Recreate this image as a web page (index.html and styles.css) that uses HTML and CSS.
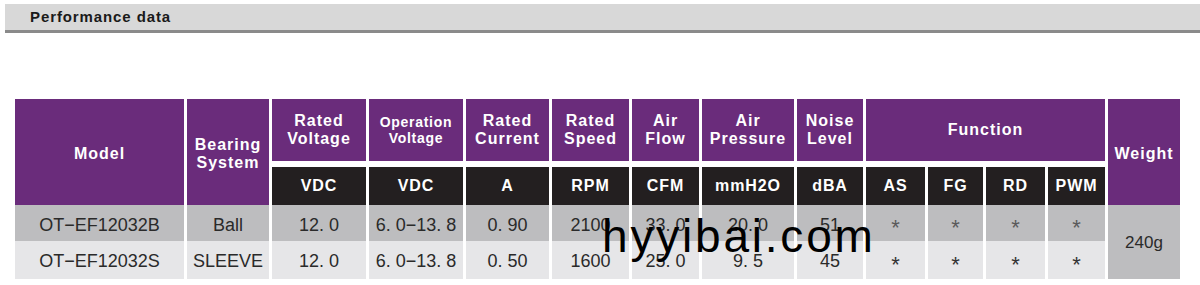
FILE: index.html
```html
<!DOCTYPE html>
<html>
<head>
<meta charset="utf-8">
<link rel="stylesheet" href="styles.css">
</head>
<body>
<div class="titlebar">Performance data</div>
<div class="tablewrap">
  <div class="grid">
    <div class="c hd tall">Model</div>
    <div class="c hd tall">Bearing<br>System</div>
    <div class="c hd">Rated<br>Voltage</div>
    <div class="c hd small">Operation<br>Voltage</div>
    <div class="c hd">Rated<br>Current</div>
    <div class="c hd">Rated<br>Speed</div>
    <div class="c hd">Air<br>Flow</div>
    <div class="c hd">Air<br>Pressure</div>
    <div class="c hd">Noise<br>Level</div>
    <div class="c hd func">Function</div>
    <div class="c hd tall">Weight</div>

    <div class="c sub">VDC</div>
    <div class="c sub">VDC</div>
    <div class="c sub">A</div>
    <div class="c sub">RPM</div>
    <div class="c sub">CFM</div>
    <div class="c sub">mmH2O</div>
    <div class="c sub">dBA</div>
    <div class="c sub">AS</div>
    <div class="c sub">FG</div>
    <div class="c sub">RD</div>
    <div class="c sub">PWM</div>

    <div class="c r1">OT−EF12032B</div>
    <div class="c r1">Ball</div>
    <div class="c r1">12. 0</div>
    <div class="c r1">6. 0−13. 8</div>
    <div class="c r1">0. 90</div>
    <div class="c r1">2100</div>
    <div class="c r1">33. 0</div>
    <div class="c r1">20. 0</div>
    <div class="c r1">51</div>
    <div class="c r1 ast">*</div>
    <div class="c r1 ast">*</div>
    <div class="c r1 ast">*</div>
    <div class="c r1 ast">*</div>
    <div class="c r1 weight">240g</div>

    <div class="c r2">OT−EF12032S</div>
    <div class="c r2">SLEEVE</div>
    <div class="c r2">12. 0</div>
    <div class="c r2">6. 0−13. 8</div>
    <div class="c r2">0. 50</div>
    <div class="c r2">1600</div>
    <div class="c r2">25. 0</div>
    <div class="c r2">9. 5</div>
    <div class="c r2">45</div>
    <div class="c r2 ast">*</div>
    <div class="c r2 ast">*</div>
    <div class="c r2 ast">*</div>
    <div class="c r2 ast">*</div>
  </div>
  <div class="watermark">hyyibai.com</div>
</div>
</body>
</html>
```
FILE: styles.css
```css
html, body {
  margin: 0;
  padding: 0;
  background: #ffffff;
}
body {
  font-family: "Liberation Sans", Arial, sans-serif;
  width: 1200px;
  height: 285px;
  overflow: hidden;
}
.titlebar {
  margin: 4px 0 0 5px;
  height: 26px;
  line-height: 26px;
  background: #d8d8d8;
  border-bottom: 3px solid #8a8a8a;
  padding-left: 25px;
  font-weight: bold;
  font-size: 15px;
  letter-spacing: 0.9px;
  color: #1a1a1a;
}
.tablewrap {
  position: relative;
  margin: 66px 0 0 15px;
  width: 1165px;
}
.grid {
  display: grid;
  grid-template-columns: 169px 82px 94px 94px 83px 77px 67px 92px 66px 59px 55px 59px 57px 72px;
  grid-template-rows: 62px 6px 38px 36px 38px;
  column-gap: 3px;
  row-gap: 0;
}
.c {
  display: flex;
  align-items: center;
  justify-content: center;
  text-align: center;
}
.hd {
  grid-row: 1;
  background: #6a2c7b;
  color: #ffffff;
  font-weight: bold;
  font-size: 16px;
  line-height: 18px;
  letter-spacing: 1px;
}
.hd.small {
  font-size: 14px;
  line-height: 16px;
  letter-spacing: 0.7px;
}
.hd.tall {
  grid-row: 1 / 4;
  padding-top: 3px;
}
.hd.func {
  grid-column: span 4;
}
.sub {
  grid-row: 3;
  background: #231f20;
  color: #ffffff;
  font-weight: bold;
  font-size: 16px;
  letter-spacing: 0.9px;
}
.r1, .r2 {
  font-size: 18px;
  color: #2a2a2a;
}
.r1 {
  grid-row: 4;
  background: #bdbdbf;
  padding-top: 4px;
}
.r2 {
  grid-row: 5;
  background: #e6e6e8;
  padding-top: 3px;
}
.r1.weight {
  grid-row: 4 / 6;
  background: #bdbdbf;
  font-size: 17px;
  padding-top: 2px;
}
.ast {
  font-size: 22px;
}
.r1.ast {
  color: #5a5a5a;
  padding-top: 10px;
}
.r2.ast {
  color: #333333;
  padding-top: 10px;
}
.watermark {
  position: absolute;
  left: 587px;
  top: 114px;
  font-family: "Liberation Sans", Arial, sans-serif;
  font-size: 46px;
  line-height: 46px;
  letter-spacing: 2.8px;
  color: #000000;
  white-space: nowrap;
}
```
